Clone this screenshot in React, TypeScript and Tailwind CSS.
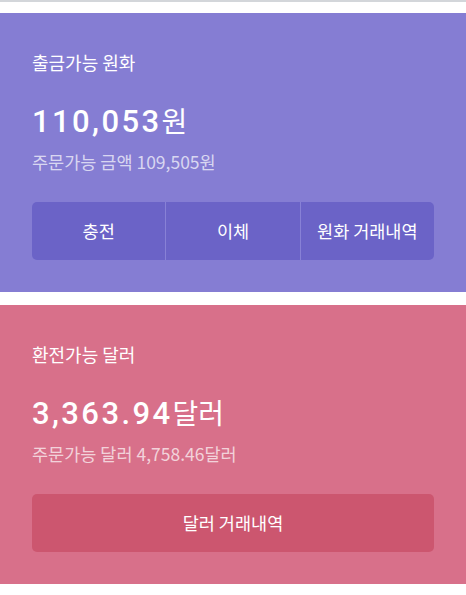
import React from "react";

const kr = { fontFamily: '"Noto Sans CJK KR", "Noto Sans", sans-serif' };
const num = { fontFamily: 'Roboto, "Noto Sans CJK KR", sans-serif' };

function Card({
  bg,
  label,
  amount,
  unit,
  sub,
  children,
}: {
  bg: string;
  label: string;
  amount: string;
  unit: string;
  sub: string;
  children: React.ReactNode;
}) {
  return (
    <div className={`${bg} h-[279px] px-[32px] pt-[37px] text-white`} style={kr}>
      <div className="h-[24px] text-[18px] leading-[24px]">{label}</div>
      <div className="mt-[28px] h-[36px] flex items-baseline leading-[36px]">
        <span className="text-[31px] font-medium tracking-[2.4px]" style={num}>
          {amount}
        </span>
        <span className="text-[28px]">{unit}</span>
      </div>
      <div className="mt-[12px] h-[24px] text-[17.5px] leading-[24px] text-white/70">{sub}</div>
      <div className="mt-[28px]">{children}</div>
    </div>
  );
}

export default function App() {
  return (
    <div className="w-[466px] h-[595px] bg-white border-t-2 border-[#d3d6da] pt-[11px] flex flex-col gap-[13px]">
      <Card
        bg="bg-[#857dd3]"
        label="출금가능 원화"
        amount="110,053"
        unit="원"
        sub="주문가능 금액 109,505원"
      >
        <div className="flex h-[58px] rounded-[5px] bg-[#6b63c7] overflow-hidden">
          <div className="flex-1 flex items-center justify-center text-[17.5px]">충전</div>
          <div className="w-px bg-[#8881d6]" />
          <div className="flex-1 flex items-center justify-center text-[17.5px]">이체</div>
          <div className="w-px bg-[#8881d6]" />
          <div className="flex-1 flex items-center justify-center text-[17.5px]">원화 거래내역</div>
        </div>
      </Card>
      <Card
        bg="bg-[#d8708a]"
        label="환전가능 달러"
        amount="3,363.94"
        unit="달러"
        sub="주문가능 달러 4,758.46달러"
      >
        <div className="flex h-[58px] rounded-[5px] bg-[#cc566f] items-center justify-center text-[17.5px]">
          달러 거래내역
        </div>
      </Card>
    </div>
  );
}
